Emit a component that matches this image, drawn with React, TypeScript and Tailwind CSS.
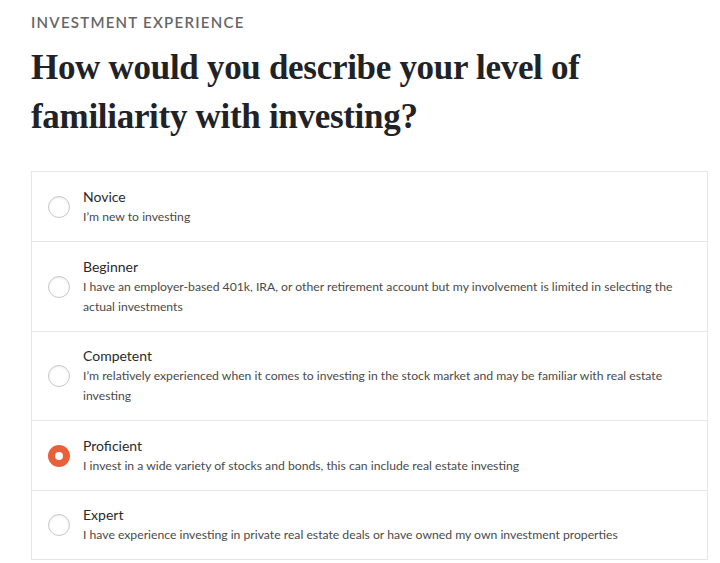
import React from "react";

const options = [
  { title: "Novice", desc: "I’m new to investing", h: "h-[69px]" },
  {
    title: "Beginner",
    desc: "I have an employer-based 401k, IRA, or other retirement account but my involvement is limited in selecting the actual investments",
    h: "h-[90px]",
  },
  {
    title: "Competent",
    desc: "I’m relatively experienced when it comes to investing in the stock market and may be familiar with real estate investing",
    h: "h-[89px]",
  },
  {
    title: "Proficient",
    desc: "I invest in a wide variety of stocks and bonds, this can include real estate investing",
    h: "h-[70px]",
    selected: true,
  },
  {
    title: "Expert",
    desc: "I have experience investing in private real estate deals or have owned my own investment properties",
    h: "h-[69px]",
  },
];

export default function App() {
  return (
    <div className="w-[720px] h-[563px] bg-white overflow-hidden pl-[31px] pr-[12px] pt-[12px]">
      <div className="text-[15px] font-semibold tracking-[1.25px] text-[#666] leading-[20px] font-['Lato',sans-serif]">
        INVESTMENT EXPERIENCE
      </div>
      <h1 className="mt-[11px] text-[35px] leading-[49px] font-bold text-[#1f2328] font-['Liberation_Serif',serif] tracking-[-0.3px]">
        How would you describe your level of
        <br />
        familiarity with investing?
      </h1>
      <div className="mt-[30px] w-[677px] border border-[#e6e6e6] font-['Lato',sans-serif]">
        {options.map((o, i) => (
          <div
            key={o.title}
            className={`flex items-center ${o.h} ${i > 0 ? "border-t border-[#e6e6e6]" : ""}`}
          >
            <div className="w-[51px] flex justify-center shrink-0 pl-[2px]">
              {o.selected ? (
                <div className="w-[22px] h-[22px] rounded-full bg-[#e8613a] flex items-center justify-center">
                  <div className="w-[8px] h-[8px] rounded-full bg-white" />
                </div>
              ) : (
                <div className="w-[22px] h-[22px] rounded-full border border-[#c8c8c8] bg-white shadow-[inset_0_1px_2px_rgba(0,0,0,0.08)]" />
              )}
            </div>
            <div className="flex-1 pr-[24px]">
              <div className="text-[14px] leading-[20px] text-[#2a2a2a]">{o.title}</div>
              <div className="text-[12.2px] leading-[20px] text-[#4a4a4a]">{o.desc}</div>
            </div>
          </div>
        ))}
      </div>
    </div>
  );
}
